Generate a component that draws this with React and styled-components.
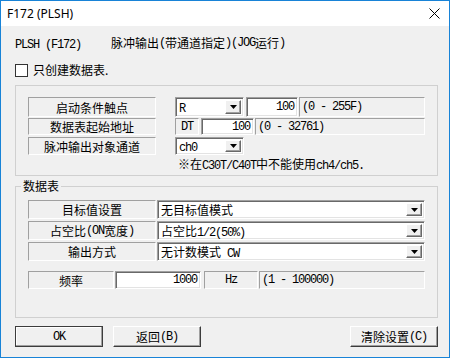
import React from 'react';
import styled, { createGlobalStyle } from 'styled-components';

const GlobalStyle = createGlobalStyle`
  html, body { margin: 0; padding: 0; background: #fff; }
  body {
    font-family: "Noto Sans CJK SC", "Noto Sans", sans-serif;
    font-size: 12px;
    color: #000;
  }
`;

const Window = styled.div`
  width: 450px;
  height: 358px;
  box-sizing: border-box;
  border: 1px solid #1883d7;
  background: #f0f0f0;
  display: flex;
  flex-direction: column;
`;

const TitleBar = styled.div`
  height: 25px;
  background: #fff;
  display: flex;
  align-items: center;
  justify-content: space-between;
  padding: 0 9px 0 6px;
  font-family: "Noto Sans", sans-serif;
  font-size: 12px;
`;

const Client = styled.div`
  display: flex;
  flex-direction: column;
  padding-left: 14px;
`;

const Latin = styled.span`
  font-family: "Liberation Mono", monospace;
  letter-spacing: -1.2px;
`;

// ascii runs get the narrow mono face, the rest stays CJK
const Txt = ({ children }) =>
  String(children)
    .split(/([\x20-\x7e]+)/)
    .filter(Boolean)
    .map((part, i) =>
      /^[\x20-\x7e]+$/.test(part) ? <Latin key={i}>{part}</Latin> : <span key={i}>{part}</span>
    );

const Header = styled.div`
  margin-top: 10px;
  height: 14px;
  line-height: 14px;
  display: flex;
  white-space: nowrap;
`;

const HeaderCode = styled.div`
  width: 96px;
`;

const CheckRow = styled.label`
  margin-top: 13px;
  height: 14px;
  line-height: 14px;
  display: flex;
  align-items: center;
  gap: 5px;
`;

const CheckBox = styled.span`
  width: 13px;
  height: 13px;
  box-sizing: border-box;
  border: 1px solid #333;
  background: #fff;
`;

const Group = styled.div`
  position: relative;
  width: 423px;
  height: ${(p) => p.h}px;
  margin-top: ${(p) => p.mt}px;
  box-sizing: border-box;
  border: 1px solid #d0d0d0;
  padding: ${(p) => p.pt}px 0 0 12px;
  display: flex;
  flex-direction: column;
`;

const Caption = styled.span`
  position: absolute;
  top: -8px;
  left: 5px;
  padding: 0 2px;
  background: #f0f0f0;
  line-height: 14px;
`;

const Row = styled.div`
  display: flex;
  height: ${(p) => p.h}px;
  margin-top: ${(p) => p.mt || 0}px;
`;

const Cell = styled.div`
  width: ${(p) => p.w}px;
  margin-left: ${(p) => p.ml || 0}px;
  box-sizing: border-box;
  border-top: 1px solid #a0a0a0;
  border-left: 1px solid #a0a0a0;
  border-bottom: 1px solid #fff;
  border-right: 1px solid #fff;
  display: flex;
  align-items: center;
  justify-content: ${(p) => (p.left ? 'flex-start' : 'center')};
  padding-left: ${(p) => (p.left ? 2 : 0)}px;
  white-space: nowrap;
`;

const Edit = styled.div`
  width: ${(p) => p.w}px;
  margin-left: ${(p) => p.ml || 0}px;
  box-sizing: border-box;
  background: #fff;
  border-top: 1px solid #a0a0a0;
  border-left: 1px solid #a0a0a0;
  border-bottom: 1px solid #fff;
  border-right: 1px solid #fff;
  box-shadow: inset 1px 1px 0 #696969, inset -1px -1px 0 #e3e3e3;
  display: flex;
  align-items: center;
  justify-content: flex-end;
  padding-right: 3px;
`;

const Combo = styled(Edit)`
  justify-content: space-between;
  padding: 2px 2px 2px 3px;
`;

const DropButton = styled.span`
  width: 16px;
  align-self: stretch;
  box-sizing: border-box;
  background: #f0f0f0;
  border-top: 1px solid #fff;
  border-left: 1px solid #fff;
  border-bottom: 1px solid #696969;
  border-right: 1px solid #696969;
  box-shadow: inset -1px -1px 0 #a0a0a0;
  display: flex;
  align-items: center;
  justify-content: center;
`;

const Arrow = () => (
  <svg width="7" height="4" viewBox="0 0 7 4">
    <path d="M0 0h7L3.5 4z" fill="#000" />
  </svg>
);

const Note = styled.div`
  margin-top: 2px;
  padding-left: 150px;
  line-height: 14px;
  white-space: nowrap;
`;

const Buttons = styled.div`
  margin-top: 8px;
  width: 423px;
  display: flex;
  gap: 10px;
`;

const Button = styled.div`
  width: 88px;
  height: 21px;
  box-sizing: border-box;
  background: #f0f0f0;
  border: 1px solid ${(p) => (p.primary ? '#3c3c3c' : '#fff')};
  border-right-color: #3c3c3c;
  border-bottom-color: #3c3c3c;
  box-shadow: inset -1px -1px 0 #a0a0a0, inset 1px 1px 0 ${(p) => (p.primary ? '#fff' : '#f0f0f0')};
  display: flex;
  align-items: center;
  justify-content: center;
  margin-left: ${(p) => (p.push ? 'auto' : '0')};
`;

const Combo1 = ({ w, ml, value }) => (
  <Combo w={w} ml={ml}>
    <span><Txt>{value}</Txt></span>
    <DropButton><Arrow /></DropButton>
  </Combo>
);

const App = () => (
  <>
    <GlobalStyle />
    <Window>
      <TitleBar>
        <span>F172 (PLSH)</span>
        <svg width="11" height="11" viewBox="0 0 11 11">
          <path d="M0.5 0.5L10.5 10.5M10.5 0.5L0.5 10.5" stroke="#000" strokeWidth="1" />
        </svg>
      </TitleBar>
      <Client>
        <Header>
          <HeaderCode><Txt>PLSH (F172)</Txt></HeaderCode>
          <Txt>脉冲输出(带通道指定)(JOG运行)</Txt>
        </Header>
        <CheckRow>
          <CheckBox />
          只创建数据表.
        </CheckRow>

        <Group h={91} mt={8} pt={11}>
          <Row h={20}>
            <Cell w={128}>启动条件触点</Cell>
            <Combo1 w={69} ml={19} value="R" />
            <Edit w={52} ml={2}><Txt>100</Txt></Edit>
            <Cell w={126} ml={1} left><Txt>(0 - 255F)</Txt></Cell>
          </Row>
          <Row h={17} mt={1}>
            <Cell w={128}>数据表起始地址</Cell>
            <Cell w={24} ml={19}><Txt>DT</Txt></Cell>
            <Edit w={53} ml={2}><Txt>100</Txt></Edit>
            <Cell w={170} ml={1} left><Txt>(0 - 32761)</Txt></Cell>
          </Row>
          <Row h={18} mt={2}>
            <Cell w={128}>脉冲输出对象通道</Cell>
            <Combo1 w={69} ml={19} value="ch0" />
          </Row>
          <Note><Txt>※在C30T/C40T中不能使用ch4/ch5.</Txt></Note>
        </Group>

        <Group h={132} mt={10} pt={13}>
          <Caption>数据表</Caption>
          <Row h={19}>
            <Cell w={128}>目标值设置</Cell>
            <Combo1 w={268} ml={1} value="无目标值模式" />
          </Row>
          <Row h={19} mt={2}>
            <Cell w={128}><Txt>占空比(ON宽度)</Txt></Cell>
            <Combo1 w={268} ml={1} value="占空比1/2(50%)" />
          </Row>
          <Row h={19} mt={2}>
            <Cell w={128}>输出方式</Cell>
            <Combo1 w={268} ml={1} value="无计数模式 CW" />
          </Row>
          <Row h={18} mt={10}>
            <Cell w={86}>频率</Cell>
            <Edit w={86} ml={1}><Txt>1000</Txt></Edit>
            <Cell w={54} ml={3}><Txt>Hz</Txt></Cell>
            <Cell w={166} ml={1} left><Txt>(1 - 100000)</Txt></Cell>
          </Row>
        </Group>

        <Buttons>
          <Button primary><Txt>OK</Txt></Button>
          <Button><Txt>返回(B)</Txt></Button>
          <Button push><Txt>清除设置(C)</Txt></Button>
        </Buttons>
      </Client>
    </Window>
  </>
);

export default App;
